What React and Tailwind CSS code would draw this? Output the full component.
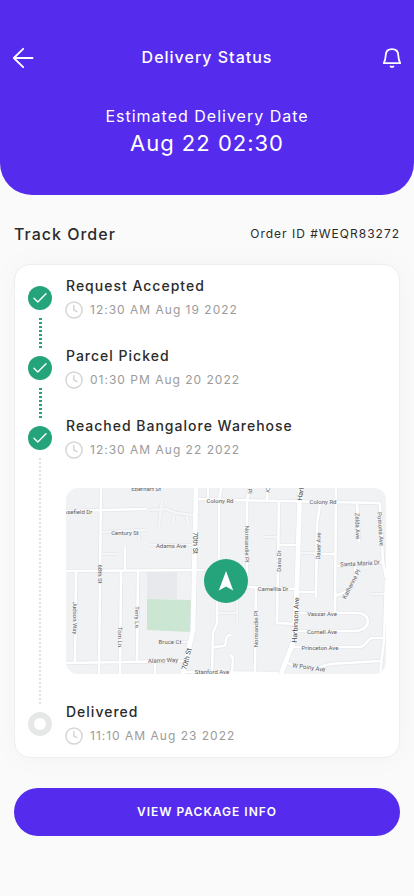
import React from 'react';

const steps = [
  { id: 1, title: 'Request Accepted', time: '12:30 AM Aug 19 2022', done: true },
  { id: 2, title: 'Parcel Picked', time: '01:30 PM Aug 20 2022', done: true },
  { id: 3, title: 'Reached Bangalore Warehose', time: '12:30 AM Aug 22 2022', done: true, current: true },
  { id: 4, title: 'Delivered', time: '11:10 AM Aug 23 2022', done: false },
];

// === MAP DATA ===
const mainRoads = [
  'M130 0 L128 96 L127 142 L117 186',
  'M234 0 L231 96 L228 152 L215 186',
];

const streets = [
  'M35 0 L34 90 L33 186',
  'M0 23 L80 21',
  'M0 83 L138 82',
  'M10 83 L9 175',
  'M55 83 L54 186',
  'M72 83 L71 173',
  'M59 59 V82',
  'M0 175 L117 173',
  'M89 175 V186',
  'M118 184 L212 185',
  'M132 11 L164 12 L314 15 L317 74 L320 90',
  'M142 0 V11',
  'M155 0 L153 12 V70',
  'M184 0 L181 12 V99',
  'M202 0 L201 12',
  'M190 100 L189 185',
  'M213 13 L211 135 L229 136',
  'M213 57 H231',
  'M254 16 L251 36 L250 109',
  'M232 104 H250',
  'M270 0 L269 124',
  'M291 15 L293 54',
  'M271 78 L317 74',
  'M289 76 L290 92 Q288 102 269 108',
  'M182 99 L231 101',
  'M232 125 H290 C307 125 305 143 288 143 H232',
  'M226 159 H293 C301 159 300 150 307 150 H319',
  'M221 175 L244 182 L264 176 L314 173',
  'M320 92 L318 152 L314 186',
  'M151 110 V135 L147 145 L146 186',
  'M148 159 L158 158 Q160 157 160 151 Q161 147 165 147',
  'M164 167 Q167 168 167 172 L166 184',
  'M250 66 H269',
];

const lanes = [
  'M83 22 L100 21 L110 25 L127 27',
  'M96 13 L93 39',
  'M108 27 L107 35',
  'M121 28 L122 36',
  'M36 44 L80 42',
  'M73 43 V53',
  'M36 66 H52',
  'M84 57 H127',
  'M94 154 H124',
  'M197 49 H212',
  'M234 65 H250',
  'M305 106 H319',
  'M152 125 H170 M171 105 V135',
];

const streetLabels = [
  { x: 80, y: 0, text: 'Eberhart St' },
  { x: 12, y: 23, text: 'osefield Dr' },
  { x: 59, y: 44, text: 'Century St' },
  { x: 105, y: 57, text: 'Adams Ave' },
  { x: 154, y: 12, text: 'Colony Rd' },
  { x: 257, y: 13, text: 'Colony Rd' },
  { x: 294, y: 75, text: 'Santa Maria Dr', r: -3 },
  { x: 207, y: 100, text: 'Camellia Dr' },
  { x: 256, y: 125, text: 'Vassar Ave' },
  { x: 256, y: 143, text: 'Cornell Ave' },
  { x: 254, y: 159, text: 'Princeton Ave' },
  { x: 243, y: 179, text: 'W Poiny Ave', r: 8 },
  { x: 104, y: 153, text: 'Bruce Ct' },
  { x: 97, y: 172, text: 'Alamo Way', r: -2 },
  { x: 146, y: 183, text: 'Stanford Ave' },
  { x: 34, y: 86, text: '68th St', r: 90 },
  { x: 9, y: 130, text: 'Judson Way', r: 90 },
  { x: 54, y: 149, text: 'Tom Ln', r: 90 },
  { x: 71, y: 129, text: 'Terry Ln', r: 90 },
  { x: 181, y: 56, text: 'Normandie Pl', r: 90 },
  { x: 189, y: 141, text: 'Normandie Pl', r: -90 },
  { x: 184, y: 3, text: 'Pl', r: 90 },
  { x: 202, y: 2, text: 'Dr', r: 90 },
  { x: 212, y: 73, text: 'Dana Dr', r: -90 },
  { x: 252, y: 58, text: 'Dauer Ave', r: -88 },
  { x: 292, y: 38, text: 'Zelda Ave', r: 88 },
  { x: 315, y: 41, text: 'Pomona Ave', r: 86 },
  { x: 285, y: 96, text: 'Katherine Pl', r: -62 },
];

const mainLabels = [
  { x: 129, y: 55, text: '70th St', r: 90 },
  { x: 121, y: 171, text: '70th St', r: -76 },
  { x: 235, y: 5, text: 'Harb', r: -80 },
  { x: 230, y: 132, text: 'Harbinson Ave', r: -87 },
];

const MapLabel = ({ label, size }) => (
  <text
    x={label.x}
    y={label.y}
    fontSize={size}
    textAnchor="middle"
    dominantBaseline="central"
    transform={label.r ? `rotate(${label.r} ${label.x} ${label.y})` : undefined}
  >
    {label.text}
  </text>
);

function RouteMap() {
  return (
    <div className="relative mt-7 h-[186px] overflow-hidden rounded-xl bg-[#f1f2f4]">
      <svg
        className="h-full w-full font-['Roboto',sans-serif]"
        viewBox="0 0 320 186"
        preserveAspectRatio="xMidYMid slice"
        role="img"
        aria-label="Package location"
      >
        <path d="M81 84 H111 V111 H81 Z" fill="#e8e9ec" />
        <path d="M81 111 L126 112 L125 144 L81 142 Z" fill="#cbe6d3" />
        <g fill="none" strokeLinejoin="round">
          <g stroke="#e4e6e8">
            {lanes.map((d) => <path key={d} d={d} strokeWidth="4" />)}
            {streets.map((d) => <path key={d} d={d} strokeWidth="4" />)}
            {mainRoads.map((d) => <path key={d} d={d} strokeWidth="6" />)}
          </g>
          {lanes.map((d) => <path key={d} d={d} stroke="#f5f6f7" strokeWidth="2.6" />)}
          <g stroke="#ffffff">
            {streets.map((d) => <path key={d} d={d} strokeWidth="2.6" />)}
            {mainRoads.map((d) => <path key={d} d={d} strokeWidth="4.8" />)}
          </g>
        </g>
        <g fill="#5f6164" stroke="#f5f6f7" strokeWidth="1" paintOrder="stroke">
          {streetLabels.map((l) => <MapLabel key={`${l.text}-${l.x}`} label={l} size={6} />)}
        </g>
        <g fill="#404245" stroke="#ffffff" strokeWidth="1" paintOrder="stroke">
          {mainLabels.map((l) => <MapLabel key={`${l.text}-${l.x}`} label={l} size={7} />)}
        </g>
      </svg>
      <div className="absolute inset-0 flex items-center justify-center">
        <span className="flex size-11 items-center justify-center rounded-full bg-[#25a47c]">
          <svg width="16" height="20" viewBox="0 0 16 20" fill="#ffffff" aria-hidden="true">
            <path d="M8 0 L15.2 19.6 L8 15.4 L0.8 19.6 Z" />
          </svg>
        </span>
      </div>
    </div>
  );
}

const ClockIcon = () => (
  <svg width="18" height="18" viewBox="0 0 18 18" fill="none" stroke="#d6d6d6" strokeWidth="1.5" strokeLinecap="round" strokeLinejoin="round" aria-hidden="true">
    <circle cx="9" cy="9" r="8.1" />
    <path d="M8.8 4.6 V9 L12 10.6" />
  </svg>
);

function StepMarker({ done }) {
  if (!done) {
    return <span className="size-6 shrink-0 rounded-full border-[6px] border-[#e6e8e8] bg-white" />;
  }
  return (
    <span className="flex size-6 shrink-0 items-center justify-center rounded-full bg-[#25a47c]">
      <svg width="14" height="10" viewBox="0 0 14 10" fill="none" stroke="#ffffff" strokeWidth="1.4" strokeLinecap="round" strokeLinejoin="round" aria-hidden="true">
        <path d="M1 5.2 L4.8 9 L13 0.8" />
      </svg>
    </span>
  );
}

function Step({ step, isLast }) {
  return (
    <li className="flex gap-3.5">
      <div className="flex flex-col items-center">
        <StepMarker done={step.done} />
        {!isLast && (
          <span
            className={`my-2 flex-1 ${step.current
              ? 'w-[2px] bg-[repeating-linear-gradient(to_bottom,#dfe1e1_0px_2px,transparent_2px_4px)]'
              : 'w-[3px] bg-[repeating-linear-gradient(to_bottom,#25a47c_0px_2px,transparent_2px_4px)]'}`}
          />
        )}
      </div>
      <div className={`-mt-2.5 min-w-0 flex-1 ${step.current ? 'pb-[38px]' : isLast ? '' : 'pb-9'}`}>
        <h3 className="text-sm leading-5 font-medium tracking-[1px] text-[#2b2b2b]">{step.title}</h3>
        <p className="mt-1 -ml-px flex h-5 items-center gap-[7px] text-xs tracking-[1px] text-[#9b9b9b]">
          <ClockIcon />
          {step.time}
        </p>
        {step.current && <RouteMap />}
      </div>
    </li>
  );
}

export default function App() {
  return (
    <div className="min-h-screen bg-[#fafafa] font-['Inter',sans-serif]">
      <header className="rounded-b-[32px] bg-[#552bee] px-3 pt-[46px] pb-9 text-white">
        <div className="flex items-center justify-between">
          <button type="button" aria-label="Back" className="flex size-[22px] items-center justify-center">
            <svg width="22" height="22" viewBox="0 0 22 22" fill="none" stroke="currentColor" strokeWidth="1.8" strokeLinecap="round" strokeLinejoin="round">
              <path d="M20.6 12 H1.8 M11.2 2.8 L1.8 12 L11.2 21.2" />
            </svg>
          </button>
          <h1 className="text-base leading-[22px] font-medium tracking-[1px]">Delivery Status</h1>
          <button type="button" aria-label="Notifications" className="flex size-[22px] items-center justify-center">
            <svg width="22" height="22" viewBox="0 0 22 22" fill="none" stroke="currentColor" strokeWidth="1.8" strokeLinecap="round" strokeLinejoin="round">
              <path d="M3.8 17.2 C5.1 15 5.6 12.4 5.8 8.8 C6 5.2 8.4 3.2 12 3.2 C15.6 3.2 18 5.2 18.2 8.8 C18.4 12.4 18.9 15 20.2 17.2 Z" />
              <path d="M10.6 20.4 Q12 21.4 13.4 20.4" />
            </svg>
          </button>
        </div>
        <div className="mt-9 text-center">
          <p className="text-base leading-6 tracking-[1px]">Estimated Delivery Date</p>
          <p className="text-[22px] leading-[31px] tracking-[1px]">Aug 22 02:30</p>
        </div>
      </header>

      <main className="px-3.5 pb-15">
        <div className="flex items-center justify-between pt-[27px]">
          <h2 className="text-base leading-6 font-medium tracking-[1px] text-[#2b2b2b]">Track Order</h2>
          <p className="text-xs tracking-[1px] text-[#2b2b2b]">Order ID #WEQR83272</p>
        </div>

        <ol className="mt-[18px] rounded-2xl border border-[#eeeeee] bg-white px-[13px] pt-[21px] pb-[11px] shadow-[0_0_30px_rgba(0,0,0,0.03)]">
          {steps.map((step, i) => (
            <Step key={step.id} step={step} isLast={i === steps.length - 1} />
          ))}
        </ol>

        <button type="button" className="mt-[30px] h-12 w-full rounded-full bg-[#552bee] text-xs font-semibold tracking-[1px] text-white">
          VIEW PACKAGE INFO
        </button>
      </main>
    </div>
  );
}
